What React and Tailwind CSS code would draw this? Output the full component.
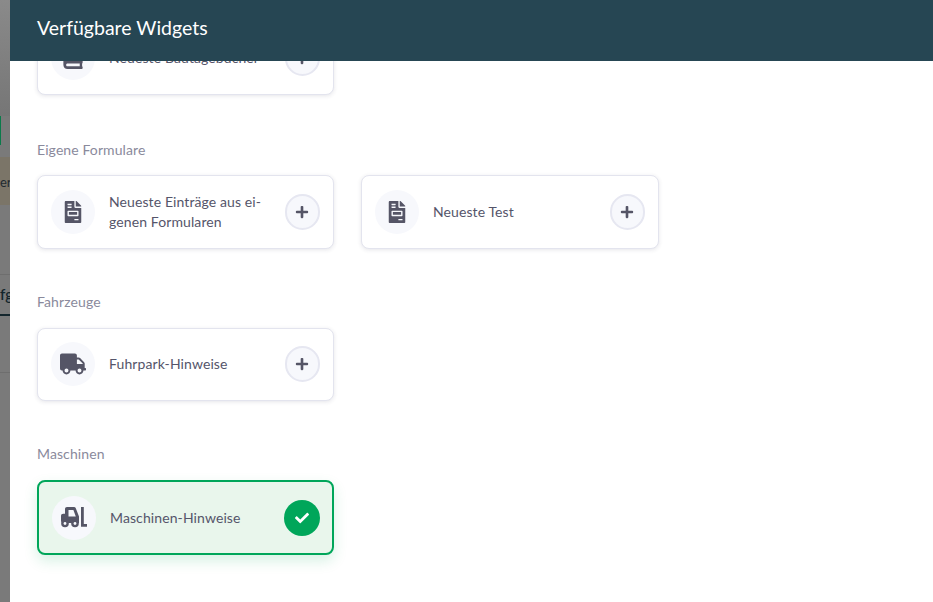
import React from "react";
import { FaFileInvoice, FaTruck, FaBook, FaPlus, FaCheck } from "react-icons/fa";

function Forklift() {
  return (
    <svg width="26" height="21" viewBox="0 0 26 21" fill="#555566">
      <path fillRule="evenodd" d="M6 0h7c.9 0 1.500.4 1.800 1.200L18 9.500V16H2a2 2 0 0 1-2-2V9c0-1.300.9-2.200 2.200-2.200H4V2c0-1.200.8-2 2-2Zm1.500 3v6.500h7.300L12.400 3H7.500Z" />
      <circle cx="4" cy="16.500" r="3.800" />
      <circle cx="4" cy="16.500" r="1.400" fill="#f7f8fc" />
      <circle cx="14" cy="16.500" r="3.800" />
      <circle cx="14" cy="16.500" r="1.400" fill="#f7f8fc" />
      <path d="M20 0h2.800v17H26v2.800h-6V0Z" />
    </svg>
  );
}

function Card({ icon, text, selected, wide }) {
  return (
    <div
      className={
        "flex items-center rounded-lg " +
        (wide ? "w-[298px] " : "w-[297px] ") +
        (selected
          ? "border-2 border-[#00a65a] bg-[#e9f6ec] pl-[13px] pr-[12px] shadow-[0_6px_14px_rgba(0,166,90,0.16)] h-[75px]"
          : "border border-[#e3e4ee] bg-white pl-[13px] pr-[13px] shadow-[0_1px_4px_rgba(40,40,70,0.12)] h-[73.500px]")
      }
    >
      <div className="w-11 h-11 rounded-full bg-[#f7f8fc] flex items-center justify-center shrink-0 text-[#555566]">
        {icon}
      </div>
      <div className="ml-[14px] flex-1 text-[14px] leading-[20px] tracking-[0.1px] text-[#55556a] pr-2">{text}</div>
      {selected ? (
        <div className="w-[36px] h-[36px] rounded-full bg-[#00a65a] flex items-center justify-center shrink-0 text-white">
          <FaCheck size={14} />
        </div>
      ) : (
        <div className="w-[35.500px] h-[36px] rounded-full bg-[#f7f8fc] border-2 border-[#e6e7f1] flex items-center justify-center shrink-0 text-[#555566]">
          <FaPlus size={14} />
        </div>
      )}
    </div>
  );
}

function Section({ title, first, children }) {
  return (
    <section className="mt-[43px]">
      <h3
        className={
          "text-[14px] leading-[20px] tracking-[0.1px] text-[#8a8a9c] " +
          (first ? "pt-[0.5px] mb-[15.500px]" : "mb-[16px]")
        }
      >
        {title}
      </h3>
      <div className="flex gap-[27px]">{children}</div>
    </section>
  );
}

export default function App() {
  return (
    <div className="flex w-[933px] h-[602px] overflow-hidden bg-white font-['Lato','Open_Sans',sans-serif]">
      {/* page dimmed behind the drawer */}
      <div className="w-[10px] h-full shrink-0 overflow-hidden bg-[#7a7a7a] flex flex-col">
        <div className="h-[116px] shrink-0 bg-gradient-to-b from-[#8a8a8a] to-[#767676]" />
        <div className="h-[29px] w-px shrink-0 bg-[#0a7a4a]" />
        <div className="h-[12px] shrink-0" />
        <div className="h-[48px] shrink-0 bg-[#7b7568] text-[#1f2a30] text-[13px] leading-[50px] whitespace-nowrap">er</div>
        <div className="h-[70px] shrink-0 border-b border-[#6e6e6e]" />
        <div className="h-[41px] shrink-0 border-b-2 border-[#14262d] text-[#14262d] text-[15px] font-semibold leading-[39px] whitespace-nowrap">fg</div>
        <div className="h-[57px] shrink-0 border-b border-[#6e6e6e]" />
      </div>

      <div className="relative flex-1 overflow-hidden">
        <header className="absolute z-10 top-0 inset-x-0 h-[61px] bg-[#264653] flex items-center pl-[27px] text-white text-[19.500px] pb-[6px]">
          Verfügbare Widgets
        </header>
        <div className="pl-[27px] -mt-[25px]">
          <div className="mt-[46.500px] pb-[1px] flex">
            <Card icon={<FaBook size={22} />} text="Neueste Bautagebücher" />
          </div>
          <Section first title="Eigene Formulare">
            <Card icon={<FaFileInvoice size={22} />} text="Neueste Einträge aus ei-genen Formularen" />
            <Card wide icon={<FaFileInvoice size={22} />} text="Neueste Test" />
          </Section>
          <Section title="Fahrzeuge">
            <Card icon={<FaTruck size={26} />} text="Fuhrpark-Hinweise" />
          </Section>
          <Section title="Maschinen">
            <Card selected icon={<Forklift />} text="Maschinen-Hinweise" />
          </Section>
        </div>
      </div>
    </div>
  );
}
